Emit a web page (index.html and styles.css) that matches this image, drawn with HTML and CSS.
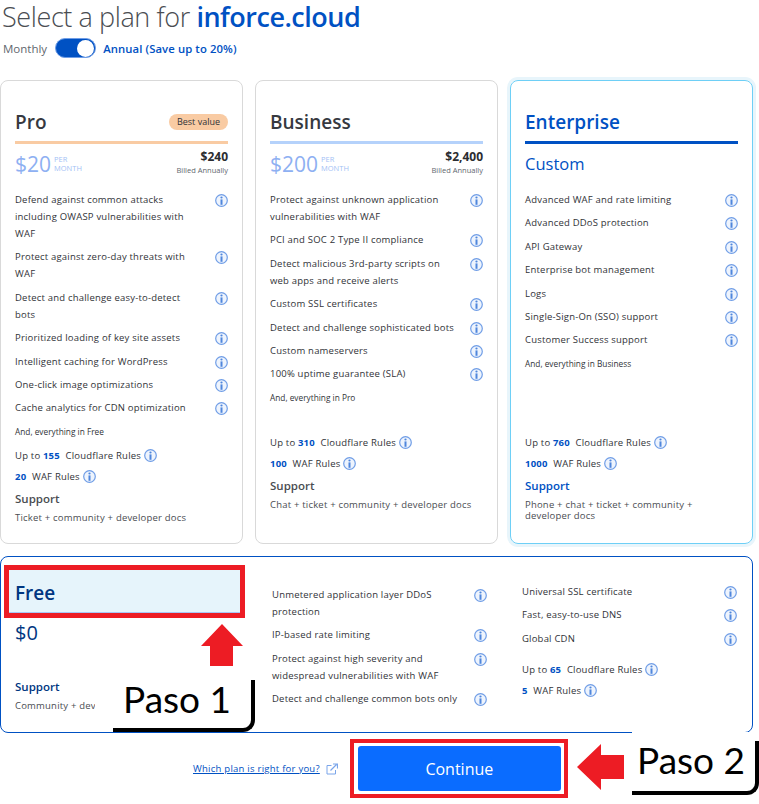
FILE: index.html
```html
<!DOCTYPE html>
<html lang="en">
<head>
    <meta charset="UTF-8">
    <meta name="viewport" content="width=device-width, initial-scale=1.0">
    <title>Select a plan</title>
    <link rel="stylesheet" href="styles.css">
</head>
<body>
    <svg class="defs" width="0" height="0">
        <symbol id="info" viewBox="0 0 13 13">
            <circle cx="6.5" cy="6.5" r="5.8" fill="#eef4fd" stroke="#6f9de6" stroke-width="1.2"/>
            <path d="M6.5 5.4v5.4" stroke="#4f86dc" stroke-width="2" fill="none"/>
            <circle cx="6.5" cy="3.5" r="1.1" fill="#4f86dc"/>
        </symbol>
    </svg>

    <div class="page">
        <h1 class="title">Select a plan for <b>inforce.cloud</b></h1>
        <div class="billing">
            <span>Monthly</span>
            <span class="toggle"><span class="knob"></span></span>
            <strong>Annual (Save up to 20%)</strong>
        </div>

        <div class="plans">
            <section class="card pro">
                <div class="card-head"><h2>Pro</h2><span class="badge">Best value</span></div>
                <div class="price-row">
                    <div class="price">$20<small>PER<br>MONTH</small></div>
                    <div class="annual"><b>$240</b><span>Billed Annually</span></div>
                </div>
                <ul class="features">
                    <li><span>Defend against common attacks including OWASP vulnerabilities with WAF</span><svg class="i"><use href="#info"/></svg></li>
                    <li><span>Protect against zero-day threats with WAF</span><svg class="i"><use href="#info"/></svg></li>
                    <li><span>Detect and challenge easy-to-detect bots</span><svg class="i"><use href="#info"/></svg></li>
                    <li><span>Prioritized loading of key site assets</span><svg class="i"><use href="#info"/></svg></li>
                    <li><span>Intelligent caching for WordPress</span><svg class="i"><use href="#info"/></svg></li>
                    <li><span>One-click image optimizations</span><svg class="i"><use href="#info"/></svg></li>
                    <li><span>Cache analytics for CDN optimization</span><svg class="i"><use href="#info"/></svg></li>
                    <li class="also">And, everything in Free</li>
                </ul>
                <div class="limit">Up to <b>155</b> Cloudflare Rules <svg class="i"><use href="#info"/></svg></div>
                <div class="limit"><b>20</b> WAF Rules <svg class="i"><use href="#info"/></svg></div>
                <h3>Support</h3>
                <p class="support">Ticket + community + developer docs</p>
            </section>

            <section class="card business">
                <div class="card-head"><h2>Business</h2></div>
                <div class="price-row">
                    <div class="price">$200<small>PER<br>MONTH</small></div>
                    <div class="annual"><b>$2,400</b><span>Billed Annually</span></div>
                </div>
                <ul class="features">
                    <li><span>Protect against unknown application vulnerabilities with WAF</span><svg class="i"><use href="#info"/></svg></li>
                    <li><span>PCI and SOC 2 Type II compliance</span><svg class="i"><use href="#info"/></svg></li>
                    <li><span>Detect malicious 3rd-party scripts on web apps and receive alerts</span><svg class="i"><use href="#info"/></svg></li>
                    <li><span>Custom SSL certificates</span><svg class="i"><use href="#info"/></svg></li>
                    <li><span>Detect and challenge sophisticated bots</span><svg class="i"><use href="#info"/></svg></li>
                    <li><span>Custom nameservers</span><svg class="i"><use href="#info"/></svg></li>
                    <li><span>100% uptime guarantee (SLA)</span><svg class="i"><use href="#info"/></svg></li>
                    <li class="also">And, everything in Pro</li>
                </ul>
                <div class="limit">Up to <b>310</b> Cloudflare Rules <svg class="i"><use href="#info"/></svg></div>
                <div class="limit"><b>100</b> WAF Rules <svg class="i"><use href="#info"/></svg></div>
                <h3>Support</h3>
                <p class="support">Chat + ticket + community + developer docs</p>
            </section>

            <section class="card enterprise">
                <div class="card-head"><h2>Enterprise</h2></div>
                <div class="custom">Custom</div>
                <ul class="features">
                    <li><span>Advanced WAF and rate limiting</span><svg class="i"><use href="#info"/></svg></li>
                    <li><span>Advanced DDoS protection</span><svg class="i"><use href="#info"/></svg></li>
                    <li><span>API Gateway</span><svg class="i"><use href="#info"/></svg></li>
                    <li><span>Enterprise bot management</span><svg class="i"><use href="#info"/></svg></li>
                    <li><span>Logs</span><svg class="i"><use href="#info"/></svg></li>
                    <li><span>Single-Sign-On (SSO) support</span><svg class="i"><use href="#info"/></svg></li>
                    <li><span>Customer Success support</span><svg class="i"><use href="#info"/></svg></li>
                    <li class="also">And, everything in Business</li>
                </ul>
                <div class="limit">Up to <b>760</b> Cloudflare Rules <svg class="i"><use href="#info"/></svg></div>
                <div class="limit"><b>1000</b> WAF Rules <svg class="i"><use href="#info"/></svg></div>
                <h3>Support</h3>
                <p class="support">Phone + chat + ticket + community + developer docs</p>
            </section>
        </div>

        <section class="free">
            <div class="free-main">
                <div class="free-head"><h2>Free</h2></div>
                <div class="free-price">$0</div>
                <h3>Support</h3>
                <p class="support">Community + developer docs</p>
            </div>
            <ul class="features free-list">
                <li><span>Unmetered application layer DDoS protection</span><svg class="i"><use href="#info"/></svg></li>
                <li><span>IP-based rate limiting</span><svg class="i"><use href="#info"/></svg></li>
                <li><span>Protect against high severity and widespread vulnerabilities with WAF</span><svg class="i"><use href="#info"/></svg></li>
                <li><span>Detect and challenge common bots only</span><svg class="i"><use href="#info"/></svg></li>
            </ul>
            <div class="free-last">
                <ul class="features">
                    <li><span>Universal SSL certificate</span><svg class="i"><use href="#info"/></svg></li>
                    <li><span>Fast, easy-to-use DNS</span><svg class="i"><use href="#info"/></svg></li>
                    <li><span>Global CDN</span><svg class="i"><use href="#info"/></svg></li>
                </ul>
                <div class="limit">Up to <b>65</b> Cloudflare Rules <svg class="i"><use href="#info"/></svg></div>
                <div class="limit"><b>5</b> WAF Rules <svg class="i"><use href="#info"/></svg></div>
            </div>
        </section>

        <div class="actions">
            <a class="which" href="#">Which plan is right for you?</a>
            <svg class="external" viewBox="0 0 12 12" width="12" height="12">
                <path d="M9.5 7v4H1V2.5h4.5" fill="none" stroke="#7ba5ea" stroke-width="1"/>
                <path d="M4.5 7.5 10.5 1.5M7 1h4.5v4.5" fill="none" stroke="#7ba5ea" stroke-width="1.2"/>
            </svg>
            <div class="continue-frame"><button type="button">Continue</button></div>
        </div>

        <!-- annotations drawn over the screenshot -->
        <div class="mark-free"></div>
        <svg class="arrow arrow-up" viewBox="0 0 42 42" width="42" height="42"><path d="M21 0 42 22H32V42H9V22H0Z" fill="#ed1c24"/></svg>
        <div class="step step-one">Paso 1</div>
        <svg class="arrow arrow-left" viewBox="0 0 47 46" width="47" height="46"><path d="M0 23 24 0V11H47V35H24V46Z" fill="#ed1c24"/></svg>
        <div class="step step-two">Paso 2</div>
    </div>
</body>
</html>
```

FILE: styles.css
```css
* {
    box-sizing: border-box;
}

body {
    margin: 0;
    font-family: "Open Sans", "Noto Sans", sans-serif;
    background-color: white;
    color: #313338;
}

.defs {
    position: absolute;
}

.page {
    position: relative;
    width: 759px;
    height: 804px;
    overflow: hidden;
}

.title {
    margin: 0;
    padding-left: 2px;
    height: 38px;
    font-size: 27px;
    line-height: 33px;
    font-weight: 300;
    color: #4a4d52;
    letter-spacing: -0.4px;
}

.title b {
    color: #0051c3;
    font-weight: 600;
    letter-spacing: -0.5px;
}

.billing {
    display: flex;
    align-items: center;
    gap: 8px;
    padding-left: 3px;
    height: 20px;
    font-size: 11.5px;
    color: #62676e;
}

.billing strong {
    margin-left: -1px;
    color: #0051c3;
    font-size: 11.3px;
    font-weight: 600;
    letter-spacing: 0.1px;
}

.toggle {
    display: flex;
    justify-content: flex-end;
    align-items: center;
    width: 41px;
    height: 20px;
    padding-right: 1px;
    border-radius: 10px;
    background-color: #0051c3;
    border: 1px solid #6f9de6;
}

.knob {
    width: 17px;
    height: 17px;
    border-radius: 50%;
    background-color: white;
}

.plans {
    display: grid;
    grid-template-columns: repeat(3, 243px);
    gap: 12px;
    margin-top: 22px;
}

.card {
    height: 464px;
    padding: 26px 14px 0;
    border: 1px solid #d9d9d9;
    border-radius: 8px;
}

.card-head {
    display: flex;
    justify-content: space-between;
    align-items: center;
    height: 37px;
    padding-bottom: 4px;
    border-bottom: 3px solid #f9cba3;
}

.business .card-head {
    border-bottom-color: #b5d2fb;
}

.enterprise {
    border-color: #6ecff6;
    box-shadow: 0 0 0 3px #e8f5fb;
}

.enterprise .card-head {
    border-bottom-color: #0051c3;
}

h2 {
    margin: 0;
    font-size: 19px;
    font-weight: 600;
    color: #36393f;
}

.enterprise h2 {
    color: #0051c3;
}

.badge {
    padding: 1px 8px;
    border-radius: 9px;
    background-color: #f9cba3;
    font-size: 9px;
    line-height: 14px;
}

.price-row {
    display: flex;
    justify-content: space-between;
    height: 47px;
    padding-top: 5px;
}

.price {
    display: flex;
    align-items: center;
    height: 30px;
    font-size: 21px;
    font-weight: 500;
    color: #8eb0f2;
}

.price small {
    margin-left: 3px;
    font-size: 7.5px;
    font-weight: 400;
    line-height: 9px;
    color: #a3bff5;
}

.annual {
    display: flex;
    flex-direction: column;
    align-items: flex-end;
}

.annual b {
    font-size: 12px;
    line-height: 15px;
    color: #2b2d31;
}

.annual span {
    font-size: 7.5px;
    line-height: 12px;
    color: #62676e;
}

.custom {
    height: 47px;
    padding-top: 8px;
    font-size: 16.5px;
    line-height: 24px;
    color: #0051c3;
}

.features {
    list-style: none;
    margin: 0;
    padding: 0;
    font-size: 9.5px;
    line-height: 17px;
    letter-spacing: 0.2px;
    min-height: 242px;
}

.features li {
    display: flex;
    justify-content: space-between;
    margin-bottom: 6.4px;
}

.features li span {
    max-width: 186px;
}

.features .also {
    font-size: 8.3px;
    letter-spacing: 0;
    margin-top: 3px;
    margin-bottom: 6px;
}

.i {
    flex: none;
    width: 13px;
    height: 13px;
    margin-top: 3px;
    vertical-align: -3px;
}

.limit {
    height: 21px;
    font-size: 9.5px;
    line-height: 17px;
    letter-spacing: 0.2px;
}

.limit b {
    margin: 0 3px;
    color: #0051c3;
}

.limit b:first-child {
    margin-left: 0;
}

h3 {
    margin: 3px 0 0;
    font-size: 11.5px;
    line-height: 16px;
    font-weight: 600;
    color: #4a4d52;
}

.enterprise h3 {
    color: #0051c3;
}

.support {
    margin: 5px 0 0;
    font-size: 9.5px;
    line-height: 11px;
    letter-spacing: 0.2px;
    color: #4a4d52;
}

.free {
    display: flex;
    width: 753px;
    height: 177px;
    margin-top: 12px;
    border: 1px solid #0051c3;
    border-radius: 8px;
}

.free-main {
    width: 271px;
    flex: none;
    padding: 13px 0 0 12px;
}

.free-head {
    display: flex;
    align-items: center;
    width: 220px;
    height: 45px;
    padding-left: 2px;
}

.free h2 {
    color: #003681;
}

.free-price {
    margin: 4px 0 0 2px;
    height: 36px;
    font-size: 20px;
    font-weight: 500;
    color: #003681;
}

.free h3 {
    margin: 24px 0 0 2px;
    color: #003681;
}

.free .support {
    width: 80px;
    margin-left: 2px;
    white-space: nowrap;
    overflow: hidden;
}

.free-list {
    width: 215px;
    padding-top: 29px;
    min-height: 0;
}

.free-last {
    width: 215px;
    margin-left: 35px;
    padding-top: 26px;
}

.free-last .features {
    min-height: 0;
    margin-bottom: 13px;
}

.actions {
    display: flex;
    align-items: center;
    height: 59px;
    margin-top: 6px;
    padding-left: 193px;
}

.which {
    font-size: 9.5px;
    letter-spacing: 0.25px;
    color: #0051c3;
}

.external {
    margin-left: 6px;
}

.continue-frame {
    width: 218px;
    height: 59px;
    margin-left: 12px;
    padding: 3px 3px 3px 4px;
    border: 4px solid #ed1c24;
}

.continue-frame button {
    display: block;
    width: 100%;
    height: 100%;
    border: 0;
    border-radius: 3px;
    background-color: #0a6cff;
    color: white;
    font-family: inherit;
    font-size: 16px;
}

.mark-free {
    position: absolute;
    left: 4px;
    top: 565px;
    width: 241px;
    height: 53px;
    border: 5px solid #ed1c24;
    background-color: #e6f4fb;
    box-shadow: inset 0 -1px 0 #a9c6f5;
    z-index: -1;
}

.arrow {
    position: absolute;
}

.arrow-up {
    left: 201px;
    top: 624px;
}

.arrow-left {
    left: 577px;
    top: 744px;
}

.step {
    position: absolute;
    background-color: white;
    color: black;
    font-family: "Lato", sans-serif;
    font-size: 37px;
    line-height: 50px;
}

.step::after {
    content: "";
    position: absolute;
    right: 0;
    bottom: 0;
    border-right: 4px solid black;
    border-bottom: 4px solid black;
    border-radius: 0 0 12px 0;
}

.step-one {
    left: 95px;
    top: 680px;
    width: 160px;
    height: 52px;
    padding-left: 28px;
    line-height: 38px;
}

.step-one::after {
    top: 0;
    left: 18px;
}

.step-two {
    left: 632px;
    top: 732px;
    width: 127px;
    height: 63px;
    padding: 3px 0 0 5px;
}

.step-two::after {
    top: 9px;
    left: 0;
}
```
